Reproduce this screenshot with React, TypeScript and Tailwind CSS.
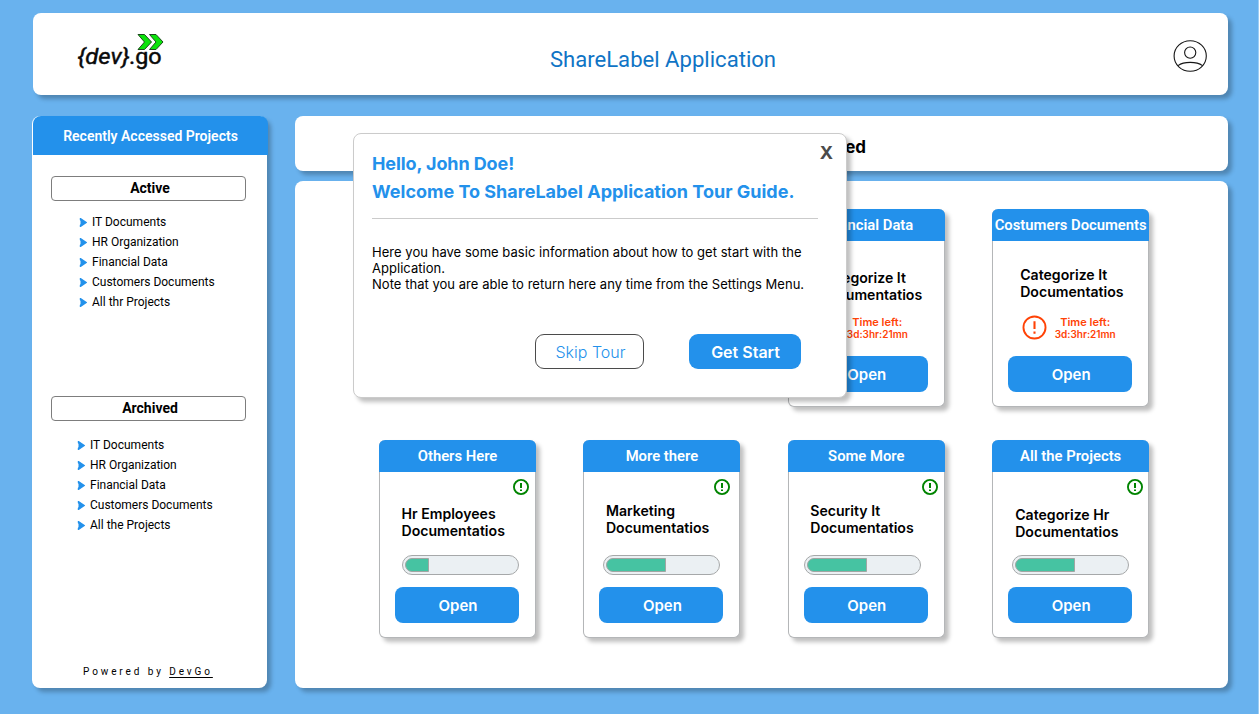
import React from "react";

const recent = {
  active: ["IT Documents", "HR Organization", "Financial Data", "Customers Documents", "All thr Projects"],
  archived: ["IT Documents", "HR Organization", "Financial Data", "Customers Documents", "All the Projects"],
};

type Project = {
  name: string;
  title: string;
  place: string;
  titlePlace: string;
  progress?: number;
  trackPlace?: string;
  badgePlace?: string;
  alertPlace?: string;
};

const projects: Project[] = [
  { name: "Financial Data", title: "Categorize It", place: "col-start-3", titlePlace: "mt-[28px] pl-[30px]", alertPlace: "pl-[25px]" },
  { name: "Costumers Documents", title: "Categorize It", place: "col-start-4", titlePlace: "mt-[25px] pl-[27px]", alertPlace: "pl-[28.500px]" },
  { name: "Others Here", title: "Hr Employees", place: "", titlePlace: "mt-[10px] pl-[21.500px]", progress: 24, trackPlace: "ml-[22px]", badgePlace: "mr-[6px]" },
  { name: "More there", title: "Marketing", place: "", titlePlace: "mt-[7px] pl-[21.500px]", progress: 60, trackPlace: "ml-[19px]", badgePlace: "mr-[9px]" },
  { name: "Some More", title: "Security It", place: "", titlePlace: "mt-[7px] pl-[21.500px]", progress: 60, trackPlace: "ml-[15px]", badgePlace: "mr-[6px]" },
  { name: "All the Projects", title: "Categorize Hr", place: "", titlePlace: "mt-[11px] pl-[22px]", progress: 60, trackPlace: "ml-[19px]", badgePlace: "mr-[5px]" },
];

function Logo() {
  return (
    <svg width="94" height="44" viewBox="0 0 94 44" className="ml-[40px] mt-[16px]">
      <text x="4.5" y="34.5" fontFamily="Roboto, sans-serif" fontSize="22" fill="#0a0a0a" stroke="#0a0a0a" strokeWidth="0.45" textLength="52" lengthAdjust="spacingAndGlyphs" fontStyle="italic">{"{dev}"}</text>
      <text x="56" y="34.5" fontFamily="Roboto, sans-serif" fontSize="22" fill="#0a0a0a" stroke="#0a0a0a" strokeWidth="0.5" textLength="32.5" lengthAdjust="spacingAndGlyphs">.go</text>
      <g fill="#0be30b" stroke="#1c4a1c" strokeWidth="1">
        <path d="M65 5.500h6.500l7 7.500-7 7.500H65l6.500-7.500z" />
        <path d="M76.500 5.500h6.500l7 7.500-7 7.500h-6.500l6.500-7.500z" />
      </g>
    </svg>
  );
}

function UserIcon() {
  return (
    <svg width="36" height="34" viewBox="0 0 36 34" fill="none" stroke="#161616" strokeWidth="1.100" className="mr-[20px] mt-[4px]">
      <ellipse cx="18.200" cy="17" rx="16.100" ry="15.300" />
      <circle cx="18.200" cy="13.600" r="5.600" />
      <path d="M6 26.600C12 22.300 24.500 22.300 30.500 26.600" />
    </svg>
  );
}

function Arrow() {
  return (
    <svg width="8" height="9" viewBox="0 0 8 9" fill="#2391eb" className="shrink-0">
      <path d="M0.800 0H1.800L8 4.200V4.800L1.800 9H0.800V7L1.500 6V3L0.800 2z" />
    </svg>
  );
}

function Exclamation({ size, color, weight, dash, gap }: { size: number; color: string; weight: number; dash: number; gap: string }) {
  return (
    <svg width={size} height={size} viewBox="0 0 24 24" fill="none" stroke={color} strokeWidth={weight} className={gap}>
      <circle cx="12" cy="12" r="10.600" />
      <path d="M12 6v7.500M12 15.800v2.300" strokeWidth={dash} />
    </svg>
  );
}

function ProjectList({ items, className }: { items: string[]; className: string }) {
  return (
    <ul className={`flex flex-col text-[12px] leading-5 text-black ${className}`}>
      {items.map((item) => (
        <li key={item} className="flex h-5 items-center gap-[5px]">
          <Arrow />
          {item}
        </li>
      ))}
    </ul>
  );
}

function SectionTitle({ children }: { children: React.ReactNode }) {
  return (
    <h3 className="mx-[19px] flex h-[25px] w-[195px] items-center justify-center rounded border border-[#7d7d7d] pl-[3px] text-[14px] font-bold text-black">
      {children}
    </h3>
  );
}

function Card({ project }: { project: Project }) {
  return (
    <article className={`flex h-[198px] w-[157px] flex-col rounded-[6px] border border-t-0 border-[#b4b6b8] bg-white shadow-[4px_4px_4px_rgba(0,0,0,0.25)] ${project.place}`}>
      <h3 className="-mx-px flex h-[32px] shrink-0 items-center justify-center whitespace-nowrap rounded-t-[6px] bg-[#2391eb] pt-[1px] font-[Roboto] text-[14.800px] font-semibold text-white">
        {project.name}
      </h3>
      {project.badgePlace && (
        <div className={`mt-[7px] flex h-4 justify-end ${project.badgePlace}`}>
          <Exclamation size={16} color="#008400" weight={2.8} dash={3} gap="" />
        </div>
      )}
      <p className={`whitespace-nowrap text-[14.100px] font-semibold leading-[17px] text-black ${project.titlePlace}`}>
        {project.title}
        <br />
        Documentatios
      </p>
      <div className="mt-auto">
        {project.alertPlace ? (
          <div className={`mb-[16px] flex items-center ${project.alertPlace}`}>
            <Exclamation size={25} color="#ff4206" weight={1.8} dash={2} gap="shrink-0" />
            <p className="ml-[8px] text-center text-[10px] font-semibold leading-[12px] text-[#ff4206]">
              <span className="block text-[11px]">Time left:</span>3d:3hr:21mn
            </p>
          </div>
        ) : (
          <div className={`mb-[12px] h-5 w-[117px] rounded-full border border-[#a6a8a9] bg-[#ebf0f3] p-[2px] ${project.trackPlace}`}>
            <div className="h-[14px] rounded-l-full border border-[#a0a6a3] bg-[#46c3a2]" style={{ width: project.progress }} />
          </div>
        )}
        <button className="mb-[14px] ml-[15px] block h-[36px] w-[124px] rounded-[8px] bg-[#2391eb] pl-[2px] pt-[2px] text-[15px] font-semibold text-white">
          Open
        </button>
      </div>
    </article>
  );
}

function TourDialog() {
  return (
    <section role="dialog" className="absolute left-[353px] top-[133px] flex h-[265px] w-[494px] flex-col rounded-[8px] border border-[#cbcbcb] bg-white px-[18px] shadow-[4px_4px_4px_rgba(0,0,0,0.25)]">
      <div className="flex justify-between">
        <h2 className="mt-[16px] whitespace-nowrap text-[18px] font-bold leading-[28px] text-[#2391eb]">
          <span className="tracking-[-0.1px]">Hello, John Doe!</span>
          <br />
          Welcome To ShareLabel Application Tour Guide.
        </h2>
        <button className="-mr-[5px] mt-[8px] h-[22px] font-[Inter] text-[18px] font-bold leading-[22px] text-[#4b4b4b]">X</button>
      </div>
      <hr className="mr-[10px] mt-[12px] border-[#cbcbcb]" />
      <p className="mt-[25px] whitespace-nowrap text-[13px] leading-[16px] tracking-[0.035px] text-black">
        Here you have some basic information about how to get start with the
        <br />
        Application.
        <br />
        Note that you are able to return here any time from the Settings Menu.
      </p>
      <div className="mr-[27px] mt-[42px] flex justify-end gap-[45px]">
        <button className="h-[35px] w-[109px] rounded-[9px] border border-[#4b4b4b] pl-[2px] text-[16px] font-[350] text-[#2391eb]">Skip Tour</button>
        <button className="h-[35px] w-[112px] rounded-[9px] bg-[#2391eb] pl-px text-[16px] font-semibold text-white">Get Start</button>
      </div>
    </section>
  );
}

export default function App() {
  return (
    <div className="relative flex h-[714px] w-[1259px] flex-col overflow-hidden border-r border-[#9dcdf4] bg-[#69b2ee] pl-[32px] pr-[30px] pt-[13px] font-[Inter,sans-serif]">
      <header className="ml-px grid h-[82px] grid-cols-[134px_1fr_74px] items-start rounded-[8px] bg-white shadow-[4px_4px_4px_rgba(0,0,0,0.25)]">
        <Logo />
        <h1 className="mt-[30px] pl-[5px] text-center font-[Roboto] text-[22.100px] leading-[32px] text-[#0f74c5]">ShareLabel Application</h1>
        <div className="flex justify-end pt-[22px]">
          <UserIcon />
        </div>
      </header>

      <div className="mt-[21px] flex">
        <aside className="flex h-[572px] w-[235px] flex-col rounded-[8px] bg-white font-[Roboto] shadow-[4px_4px_4px_rgba(0,0,0,0.25)]">
          <h2 className="-mr-px ml-px flex h-[39px] items-center justify-center rounded-t-[8px] bg-[#2391eb] pt-[2px] text-[14px] font-semibold text-white">
            Recently Accessed Projects
          </h2>
          <div className="mt-[21px]">
            <SectionTitle>Active</SectionTitle>
            <ProjectList items={recent.active} className="ml-[47px] mt-[11px]" />
          </div>
          <div className="mt-[84px]">
            <SectionTitle>Archived</SectionTitle>
            <ProjectList items={recent.archived} className="ml-[45px] mt-[14px]" />
          </div>
          <p className="mb-[9px] ml-[51px] mt-auto text-[10px] leading-[15px] tracking-[2.900px] text-black">
            Powered by <a className="underline underline-offset-2">DevGo</a>
          </p>
        </aside>

        <main className="ml-[28px] flex w-[933px] flex-col gap-[10px]">
          <div className="flex h-[55px] items-center justify-end rounded-[8px] bg-white pr-[362px] pt-[8px] text-[17px] font-bold text-black shadow-[4px_4px_4px_rgba(0,0,0,0.25)]">
            Recently Accessed
          </div>
          <div className="grid h-[507px] grid-cols-[repeat(4,157px)] content-start gap-x-[47.400px] gap-y-[33px] rounded-[8px] bg-white pl-[84px] pt-[28px] shadow-[4px_4px_4px_rgba(0,0,0,0.25)]">
            {projects.map((project) => (
              <Card key={project.name} project={project} />
            ))}
          </div>
        </main>
      </div>

      <TourDialog />
    </div>
  );
}
